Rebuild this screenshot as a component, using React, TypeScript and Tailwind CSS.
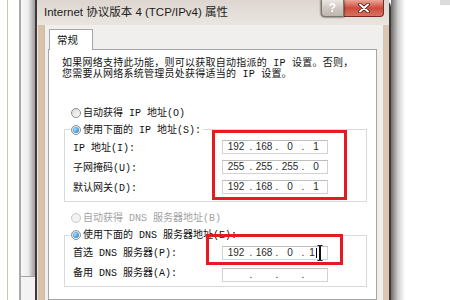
import React from "react";

const ui = "font-['Liberation_Mono','Noto_Sans_CJK_SC',monospace]";

const Radio = ({ checked, disabled }: { checked?: boolean; disabled?: boolean }) => (
  <span
    className={`flex h-[10px] w-[10px] shrink-0 items-center justify-center rounded-full border ${
      disabled
        ? "border-[#c9c9c9] bg-[#f2f2f2]"
        : "border-[#8d8f91] bg-linear-to-br from-[#d8d8d8] to-white"
    }`}
  >
    {checked && (
      <span className="h-[6px] w-[6px] rounded-full bg-[radial-gradient(circle_at_35%_35%,#9be0ff,#1a6cc0)]" />
    )}
  </span>
);

const IpBox = ({ parts, cursor }: { parts: string[]; cursor?: boolean }) => (
  <div className="flex h-[14px] w-[106px] shrink-0 items-center border border-[#d2d2d2] border-t-[#bdbdbd] bg-white font-['Liberation_Sans',sans-serif] text-[10px] leading-none text-[#2a2a2a]">
    <span className="w-[26px] text-center">{parts[0]}</span>
    <span className="w-[4px] text-center">.</span>
    <span className="w-[22px] text-center">{parts[1]}</span>
    <span className="w-[4px] text-center">.</span>
    <span className="w-[22px] text-center">{parts[2]}</span>
    <span className="w-[4px] text-center">.</span>
    <span className="flex w-[22px] items-center justify-center">
      {parts[3]}
      {cursor && (
        <>
          <span className="ml-px h-[10px] w-px bg-black" />
          <svg width="6" height="16" viewBox="0 0 6 16" className="-my-[2px] shrink-0">
            <path d="M0.5 0.5h2v15h-2M5.5 0.5h-2v15h2M3 0.5v15" fill="none" stroke="#111" strokeWidth="1" />
          </svg>
        </>
      )}
    </span>
  </div>
);

const Label = ({ children }: { children: React.ReactNode }) => (
  <div className="flex h-[20px] items-center whitespace-nowrap pl-[8px]">{children}</div>
);

const App = () => {
  return (
    <div className={`flex h-[300px] w-[450px] overflow-hidden bg-white text-[10px] text-[#111] ${ui}`}>
      {/* window behind */}
      <div className="flex h-full w-[35px] shrink-0">
        <div className="w-[7px] bg-white" />
        <div className="w-px bg-[#cfc2b2]" />
        <div className="w-[11px] bg-white" />
        <div className="w-[2px] bg-[#a9a9a9]" />
        <div className="flex w-[14px] flex-col">
          <div className="h-[277px] border-b border-[#a3a3a3] bg-linear-to-r from-[#f7f7f7] via-[#ededed] to-[#9c9c9c]" />
          <div className="flex-1 bg-[#f3f3f3]" />
        </div>
      </div>

      {/* dialog */}
      <div className="flex w-[356px] shrink-0 flex-col rounded-tr-[7px] border-x-2 border-[#3f3a37] bg-[#e8dfd7]">
        <div className="flex h-[25px] shrink-0 items-start bg-linear-to-b from-[#ddd6d0] to-[#ebe5e0]">
          <div className="flex h-full flex-1 items-center whitespace-nowrap pl-[7px] font-['Liberation_Sans','Noto_Sans_CJK_SC',sans-serif] text-[11.5px] text-[#1c1c1c]">
            Internet 协议版本 4 (TCP/IPv4) 属性
          </div>
          <div className="flex h-[17px] w-[23px] items-center justify-center rounded-bl-[4px] border border-t-0 border-[#7e746c] bg-linear-to-b from-[#ece7e3] via-[#cfc8c2] to-[#bdb5ae] font-['Liberation_Sans',sans-serif] text-[12px] font-bold text-white drop-shadow-[0_0_1px_rgba(0,0,0,0.8)]">
            ?
          </div>
          <div className="flex h-[17px] w-[40px] items-center justify-center rounded-br-[4px] border border-l-0 border-t-0 border-[#7a2a20] bg-linear-to-b from-[#eaa596] via-[#cc4a3c] to-[#d7735f]">
            <svg width="12" height="10" viewBox="0 0 12 10">
              <path d="M2 1.5l8 7M10 1.5l-8 7" stroke="#4a1a14" strokeWidth="3.6" strokeLinecap="round" />
              <path d="M2 1.5l8 7M10 1.5l-8 7" stroke="#ffffff" strokeWidth="2" strokeLinecap="round" />
            </svg>
          </div>
          <div className="w-[5px]" />
        </div>

        <div className="flex flex-1">
          <div className="w-[7px] border-l border-[#efe4da] bg-[#d9c1ac]" />
          <div className="flex flex-1 flex-col border-l border-[#c9bdb2] bg-[#f1efed] pl-[3px] pr-[6px] pt-[4px]">
            <div className="relative ml-[1px] flex h-[21px] w-[44px] items-center border border-b-0 border-[#a8a8a8] bg-white pl-[7px] font-['Noto_Sans_CJK_SC',sans-serif] text-[10.5px]">
              常规
            </div>
            <div className="-mt-px flex flex-1 flex-col border border-[#a5a5a5] bg-white pl-[13px] pt-[8px]">
              <div className="whitespace-nowrap leading-[11px] tracking-[0.25px]">
                <div>如果网络支持此功能，则可以获取自动指派的 IP 设置。否则，</div>
                <div>您需要从网络系统管理员处获得适当的 IP 设置。</div>
              </div>

              <div className="ml-[9px] mt-[25px] flex h-[16px] items-center gap-[2px] whitespace-nowrap">
                <Radio />
                <span>自动获得 IP 地址(O)</span>
              </div>

              <div className="ml-[2px] mt-[8px] flex w-[303px] border border-[#d6dbde]">
                <div className="flex w-[147px] shrink-0 flex-col pb-[3px]">
                  <div className="-mt-[8px] ml-[5px] flex h-[16px] w-fit items-center gap-[2px] whitespace-nowrap bg-white pl-[1px] pr-[2px]">
                    <Radio checked />
                    <span>使用下面的 IP 地址(S):</span>
                  </div>
                  <Label>IP 地址(I):</Label>
                  <Label>子网掩码(U):</Label>
                  <Label>默认网关(D):</Label>
                </div>
                <div className="relative flex h-[70px] flex-col gap-[6px] border-[3px] border-[#e51a22] pb-[3px] pl-[7px] pr-[16px] pt-[7px]">
                  <IpBox parts={["192", "168", "0", "1"]} />
                  <IpBox parts={["255", "255", "255", "0"]} />
                  <IpBox parts={["192", "168", "0", "1"]} />
                </div>
              </div>

              <div className="ml-[9px] mt-[8px] flex h-[16px] items-center gap-[2px] whitespace-nowrap text-[#a3a3a3]">
                <Radio disabled />
                <span>自动获得 DNS 服务器地址(B)</span>
              </div>

              <div className="ml-[2px] mt-[9px] flex w-[303px] border border-[#d6dbde]">
                <div className="flex w-[141px] shrink-0 flex-col pb-[3px]">
                  <div className="-mt-[9px] ml-[5px] flex h-[16px] w-fit items-center gap-[2px] whitespace-nowrap bg-white pl-[1px] pr-[2px]">
                    <Radio checked />
                    <span>使用下面的 DNS 服务器地址(E):</span>
                  </div>
                  <Label>首选 DNS 服务器(P):</Label>
                  <Label>备用 DNS 服务器(A):</Label>
                </div>
                <div className="-mt-[2px] flex flex-col">
                  <div className="relative w-fit border-[3px] border-[#e51a22] pb-[2px] pl-[13px] pr-[12px] pt-[9px]">
                    <IpBox parts={["192", "168", "0", "1"]} cursor />
                  </div>
                  <div className="ml-[16px] mt-[3px]">
                    <IpBox parts={["", "", "", ""]} />
                  </div>
                </div>
              </div>
            </div>
          </div>
          <div className="w-[6px] border-l border-[#cfc6bd] bg-[#dcc5b1]" />
        </div>
      </div>

      {/* desktop to the right */}
      <div className="flex flex-1">
        <div className="w-[14px] bg-linear-to-r from-[#6f6f6f] via-[#cfcfcf] to-white" />
        <div className="flex flex-1 flex-col items-end">
          <div className="h-[5px] w-[10px] bg-[#dcdcdc]" />
        </div>
      </div>
    </div>
  );
};

export default App;
